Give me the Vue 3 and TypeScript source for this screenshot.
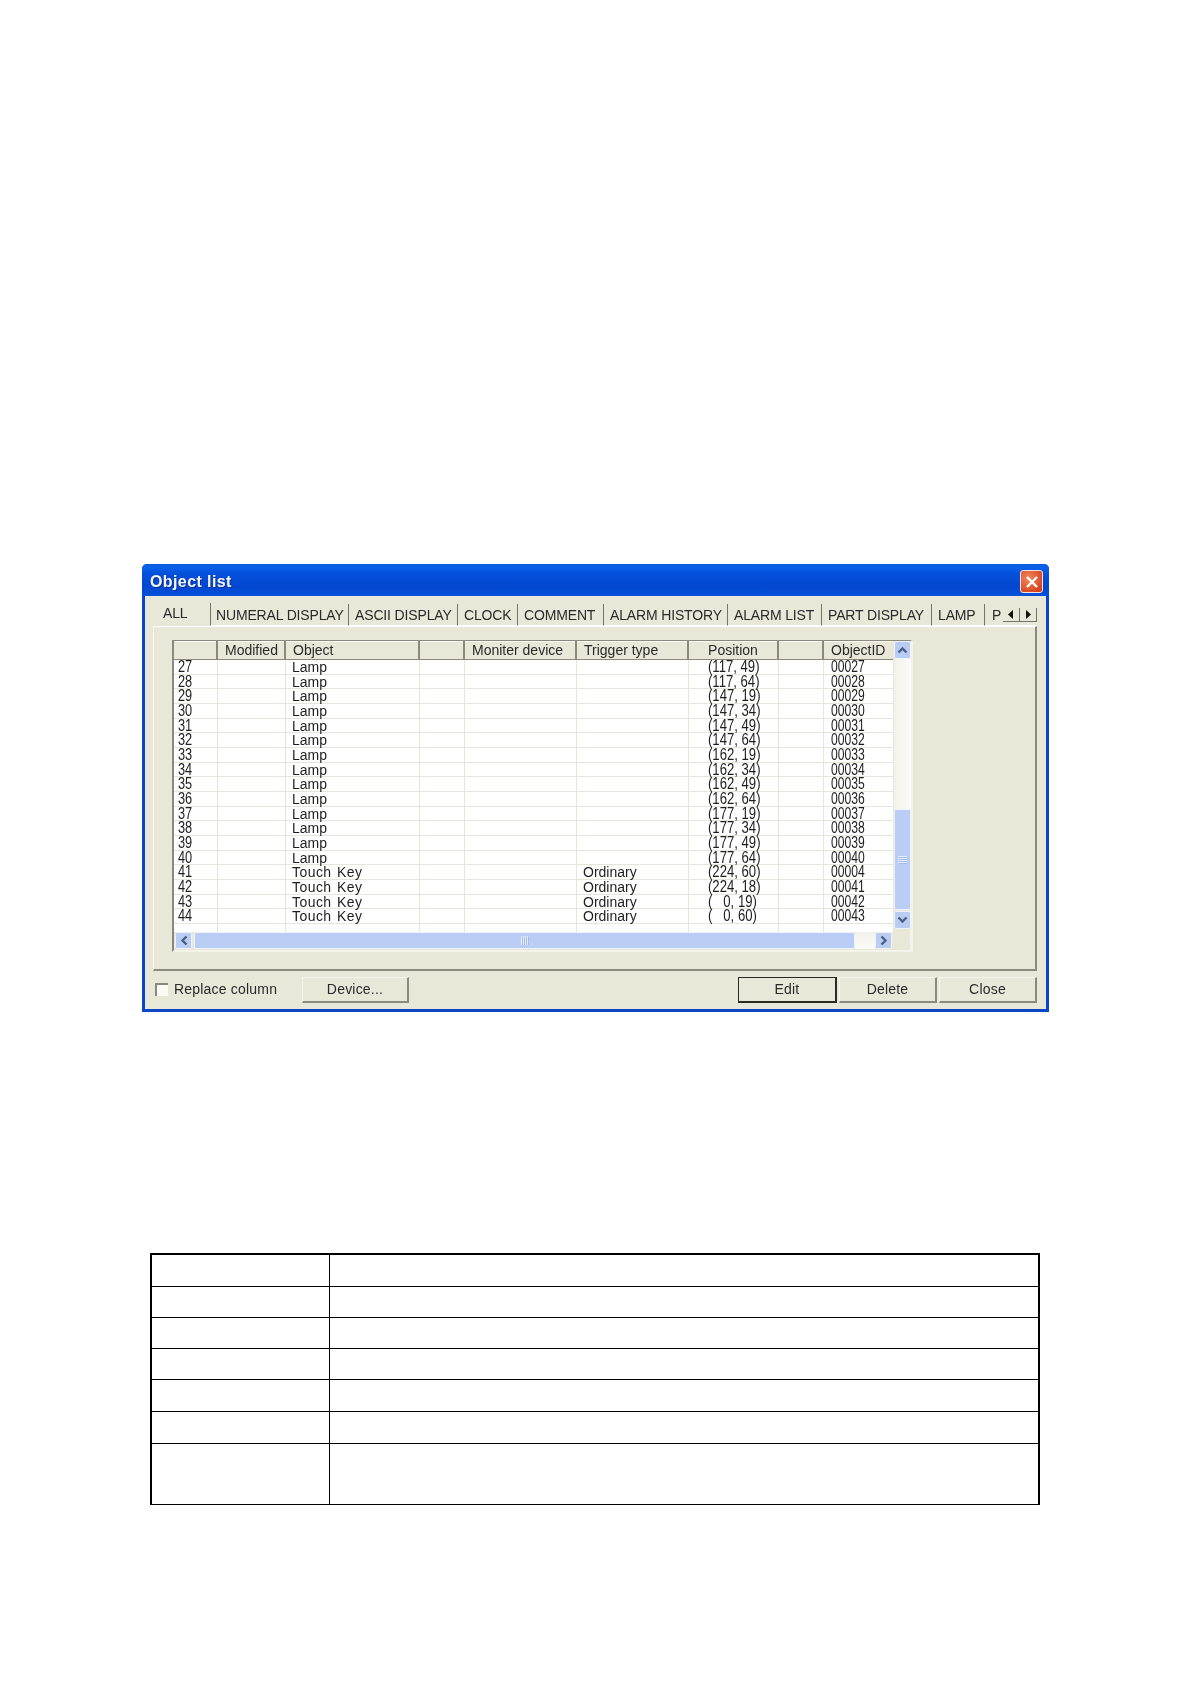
<script setup lang="ts">
import { computed } from 'vue'

interface Tab {
  label: string
  width: number
}

interface Row {
  no: number
  object: string
  trigger: string
  x: number
  y: number
  id: string
}

const tabs: Tab[] = [
  { label: 'NUMERAL DISPLAY', width: 138 },
  { label: 'ASCII DISPLAY', width: 109 },
  { label: 'CLOCK', width: 60 },
  { label: 'COMMENT', width: 86 },
  { label: 'ALARM HISTORY', width: 124 },
  { label: 'ALARM LIST', width: 94 },
  { label: 'PART DISPLAY', width: 110 },
  { label: 'LAMP', width: 53 },
]

const headers = [
  { label: '', align: 'left' },
  { label: 'Modified', align: 'left' },
  { label: 'Object', align: 'left' },
  { label: '', align: 'left' },
  { label: 'Moniter device', align: 'left' },
  { label: 'Trigger type', align: 'left' },
  { label: 'Position', align: 'center' },
  { label: '', align: 'left' },
  { label: 'ObjectID', align: 'left' },
]

const lampPositions = [
  [117, 49], [117, 64], [147, 19], [147, 34], [147, 49], [147, 64], [162, 19],
  [162, 34], [162, 49], [162, 64], [177, 19], [177, 34], [177, 49], [177, 64],
]

const rows = computed<Row[]>(() => {
  const lamps = lampPositions.map(([x, y], i) => ({
    no: 27 + i,
    object: 'Lamp',
    trigger: '',
    x,
    y,
    id: String(27 + i).padStart(5, '0'),
  }))
  const keys = [
    [224, 60, '00004'],
    [224, 18, '00041'],
    [0, 19, '00042'],
    [0, 60, '00043'],
  ] as const
  return [
    ...lamps,
    ...keys.map(([x, y, id], i) => ({
      no: 41 + i,
      object: 'Touch Key',
      trigger: 'Ordinary',
      x,
      y,
      id,
    })),
  ]
})

function position(r: Row) {
  const x = r.x === 0 ? '\u2007 0' : String(r.x)
  return `(${x}, ${r.y})`
}

const specRows = [32, 31, 31, 31, 32, 32, 60]
</script>

<template>
  <div class="page">
    <div class="dialog">
      <div class="titlebar">
        <span class="title">Object list</span>
        <span class="close">
          <svg width="16" height="16" viewBox="0 0 16 16">
            <path d="M3 3 13 13M13 3 3 13" stroke="#fff" stroke-width="2.4" fill="none" />
          </svg>
        </span>
      </div>
      <div class="client">
        <div class="tabstrip">
          <div class="tab active">ALL</div>
          <div v-for="t in tabs" :key="t.label" class="tab" :style="{ width: `${t.width}px` }">{{ t.label }}</div>
          <div class="tab last">P</div>
          <div class="tabnav">
            <span class="navbtn">
              <svg width="6" height="9" viewBox="0 0 6 9"><path d="M5 0v9L0 4.500z" fill="#111" /></svg>
            </span>
            <span class="navbtn">
              <svg width="6" height="9" viewBox="0 0 6 9"><path d="M1 0v9l5-4.500z" fill="#111" /></svg>
            </span>
          </div>
        </div>
        <div class="panel">
          <div class="list">
            <div class="list-top">
              <div class="grid">
                <div class="head">
                  <div v-for="(h, i) in headers" :key="i" class="hcell" :class="h.align">{{ h.label }}</div>
                </div>
                <div class="body">
                  <div v-for="r in rows" :key="r.no" class="row">
                    <div class="cell"><span class="num no">{{ r.no }}</span></div>
                    <div class="cell"></div>
                    <div class="cell text" :class="{ key: r.object === 'Touch Key' }">{{ r.object }}</div>
                    <div class="cell"></div>
                    <div class="cell"></div>
                    <div class="cell text">{{ r.trigger }}</div>
                    <div class="cell pos"><span class="num xy">{{ position(r) }}</span></div>
                    <div class="cell"></div>
                    <div class="cell idcell"><span class="num id">{{ r.id }}</span></div>
                  </div>
                  <div class="row filler">
                    <div v-for="n in 9" :key="n" class="cell"></div>
                  </div>
                </div>
              </div>
              <div class="vscroll">
                <span class="sbtn">
                  <svg width="11" height="8" viewBox="0 0 11 8"><path d="M1.500 6.500 5.500 2.500 9.500 6.500" stroke="#4a5f8c" stroke-width="2.400" fill="none" /></svg>
                </span>
                <div class="vtrack"></div>
                <div class="vthumb">
                  <svg width="9" height="8" viewBox="0 0 9 8">
                    <path d="M0 .5h9M0 2.500h9M0 4.500h9M0 6.500h9" stroke="#e6edfc" fill="none" />
                    <path d="M1 1.500h8M1 3.500h8M1 5.500h8M1 7.500h8" stroke="#a4bbe8" fill="none" />
                  </svg>
                </div>
                <span class="sbtn">
                  <svg width="11" height="8" viewBox="0 0 11 8"><path d="M1.500 1.500 5.500 5.500 9.500 1.500" stroke="#4a5f8c" stroke-width="2.400" fill="none" /></svg>
                </span>
              </div>
            </div>
            <div class="hscroll">
              <span class="sbtn h">
                <svg width="8" height="11" viewBox="0 0 8 11"><path d="M6.500 1.500 2.500 5.500 6.500 9.500" stroke="#4a5f8c" stroke-width="2.400" fill="none" /></svg>
              </span>
              <div class="hthumb">
                <svg width="8" height="9" viewBox="0 0 8 9">
                  <path d="M.5 0v9M2.500 0v9M4.500 0v9M6.500 0v9" stroke="#e6edfc" fill="none" />
                  <path d="M1.500 1v8M3.500 1v8M5.500 1v8M7.500 1v8" stroke="#a4bbe8" fill="none" />
                </svg>
              </div>
              <div class="htrack"></div>
              <span class="sbtn h">
                <svg width="8" height="11" viewBox="0 0 8 11"><path d="M1.500 1.500 5.500 5.500 1.500 9.500" stroke="#4a5f8c" stroke-width="2.400" fill="none" /></svg>
              </span>
            </div>
          </div>
        </div>
        <div class="footer">
          <span class="check"></span>
          <span class="check-label">Replace column</span>
          <button class="btn device">Device...</button>
          <span class="spacer"></span>
          <button class="btn default">Edit</button>
          <button class="btn">Delete</button>
          <button class="btn">Close</button>
        </div>
      </div>
    </div>

    <div class="spec">
      <div v-for="(h, i) in specRows" :key="i" class="spec-row" :style="{ height: `${h}px` }">
        <div class="spec-key"></div>
        <div class="spec-val"></div>
      </div>
    </div>
  </div>
</template>

<style scoped>
.page {
  width: 1191px;
  height: 1684px;
  padding-top: 564px;
  box-sizing: border-box;
  background: #fff;
  font-family: "Liberation Sans", Arial, sans-serif;
  overflow: hidden;
}
.dialog {
  width: 907px;
  height: 448px;
  margin-left: 142px;
  display: flex;
  flex-direction: column;
  background: #0b45c8;
  border-radius: 5px 5px 0 0;
  box-sizing: border-box;
  filter: blur(0.4px);
}
.titlebar {
  height: 32px;
  flex: none;
  display: flex;
  align-items: center;
  justify-content: space-between;
  padding: 3px 6px 0 8px;
  box-sizing: border-box;
  border-radius: 5px 5px 0 0;
  background: linear-gradient(180deg, #0a5ce0 0%, #0a62e8 10%, #0450da 30%, #0347d0 70%, #0450da 100%);
}
.title {
  color: #f4f7ff;
  font-weight: 700;
  font-size: 16px;
  letter-spacing: 0.4px;
  text-shadow: 1px 1px 0 #0a2f95;
}
.close {
  width: 23px;
  height: 23px;
  display: flex;
  align-items: center;
  justify-content: center;
  border: 1px solid #f3e3dc;
  border-radius: 3px;
  box-sizing: border-box;
  background: radial-gradient(circle at 35% 35%, #ee8a60, #dc4a25 70%, #c53a1b);
}
.client {
  flex: 1;
  margin: 0 3px 3px;
  background: #e9e7d8;
  padding: 8px 9px 0 8px;
  display: flex;
  flex-direction: column;
  min-height: 0;
}
.tabstrip {
  height: 22px;
  flex: none;
  display: flex;
  align-items: stretch;
  position: relative;
  color: #2a2a2a;
  font-size: 14px;
  letter-spacing: -0.15px;
}
.tab {
  flex: none;
  box-sizing: border-box;
  padding: 3px 0 0 6px;
  border-right: 1px solid #75736a;
  border-bottom: 1px solid #fff;
  white-space: nowrap;
  overflow: hidden;
}
.tab.active + .tab {
  padding-left: 5px;
}
.tab.active {
  width: 56px;
  padding: 2px 0 0 8px;
  margin-top: -1px;
  border-bottom-color: transparent;
  margin-left: 2px;
}
.tab.last {
  flex: 1;
  border-right: none;
  padding-left: 7px;
}
.tabnav {
  position: absolute;
  right: 0;
  top: 4px;
  display: flex;
  height: 14px;
}
.navbtn {
  width: 17px;
  display: flex;
  align-items: center;
  justify-content: center;
  background: #e9e7d8;
  border-right: 1px solid #75736a;
  border-bottom: 1px solid #75736a;
  box-sizing: border-box;
}
.panel {
  height: 345px;
  flex: none;
  box-sizing: border-box;
  background: #e9e7d8;
  border-top: 1px solid #fff;
  border-left: 1px solid #fbfaf4;
  border-right: 2px solid #8b897b;
  border-bottom: 2px solid #8b897b;
  padding: 13px 0 0 18px;
}
.list {
  width: 741px;
  height: 312px;
  box-sizing: border-box;
  border-top: 1px solid #8b897b;
  border-left: 2px solid #8b897b;
  border-right: 3px solid #f4f3ea;
  border-bottom: 2px solid #f4f3ea;
  display: flex;
  flex-direction: column;
  background: #e9e7d8;
}
.list-top {
  height: 291px;
  flex: none;
  display: flex;
}
.grid {
  width: 719px;
  flex: none;
  display: flex;
  flex-direction: column;
  background: #fff;
}
.head,
.row {
  display: grid;
  grid-template-columns: 44px 68px 134px 45px 112px 112px 90px 45px 69px;
}
.head {
  height: 18px;
  flex: none;
  background: #e9e7d8;
  border-bottom: 1px solid #8b897b;
  box-sizing: content-box;
  color: #2a2a2a;
  font-size: 14px;
}
.hcell {
  box-sizing: border-box;
  line-height: 18px;
  padding-left: 7px;
  border-right: 2px solid #8b897b;
  box-shadow: inset 0 1px 0 #fbfaf4;
  white-space: nowrap;
  overflow: hidden;
}
.hcell.center {
  text-align: center;
  padding-left: 0;
}
.hcell:last-child {
  border-right: none;
}
.body {
  flex: 1;
  min-height: 0;
  overflow: hidden;
  padding-top: 1px;
  margin-top: -1px;
}
.row {
  height: 14.67px;
  box-sizing: border-box;
  border-bottom: 1px solid #e7e5da;
  color: #1e1e1e;
  font-size: 14px;
}
.row.filler {
  height: 9px;
  border-bottom: none;
}
.cell {
  box-sizing: border-box;
  border-right: 1px solid #e7e5da;
  line-height: 14px;
  white-space: nowrap;
}
.cell:last-child {
  border-right: none;
}
.cell.text {
  padding-left: 6px;
}
.cell.key {
  letter-spacing: 0.45px;
  word-spacing: 1px;
}
.cell.idcell {
  padding-left: 7px;
}
.cell.pos {
  padding-left: 19px;
}
.num {
  display: inline-block;
  font-size: 16px;
  line-height: 14px;
  vertical-align: top;
  transform-origin: left center;
}
.no {
  margin-left: 4px;
  transform: scaleX(0.8);
}
.xy {
  transform: scaleX(0.82);
}
.id {
  transform: scaleX(0.76);
}
.vscroll {
  width: 17px;
  margin-left: 1px;
  flex: none;
  display: flex;
  flex-direction: column;
}
.sbtn {
  width: 17px;
  height: 18px;
  flex: none;
  display: flex;
  align-items: center;
  justify-content: center;
  box-sizing: border-box;
  border: 1px solid #eef2fb;
  border-radius: 2px;
  background: #b9cdf3;
}
.sbtn.h {
  width: 17px;
  height: 17px;
}
.vtrack {
  height: 150px;
  flex: none;
  background: linear-gradient(90deg, #f3f2ea, #fbfbf8);
}
.vthumb {
  height: 101px;
  flex: none;
  margin-bottom: 1px;
  display: flex;
  align-items: center;
  justify-content: center;
  box-sizing: border-box;
  border: 1px solid #eef2fb;
  border-radius: 2px;
  background: #b9cdf5;
}
.hscroll {
  height: 18px;
  flex: none;
  display: flex;
  align-items: flex-start;
  padding-left: 1px;
  box-sizing: border-box;
}
.hthumb {
  width: 661px;
  height: 17px;
  margin-left: 2px;
  flex: none;
  display: flex;
  align-items: center;
  justify-content: center;
  box-sizing: border-box;
  border: 1px solid #eef2fb;
  border-radius: 2px;
  background: #b9cdf5;
}
.htrack {
  width: 20px;
  height: 17px;
  flex: none;
  background: linear-gradient(180deg, #f3f2ea, #fbfbf8);
}
.footer {
  flex: 1;
  display: flex;
  align-items: flex-start;
  padding: 6px 0 0 2px;
  color: #2a2a2a;
  font-size: 14px;
}
.check {
  width: 13px;
  height: 13px;
  margin-top: 6px;
  box-sizing: border-box;
  border-top: 2px solid #8b897b;
  border-left: 2px solid #8b897b;
  background: #fbfaf4;
  flex: none;
}
.check-label {
  margin-left: 6px;
  margin-top: 4px;
  letter-spacing: 0.2px;
  white-space: nowrap;
  width: 128px;
}
.btn {
  width: 98px;
  height: 26px;
  margin-left: 2px;
  padding: 0 0 2px;
  box-sizing: border-box;
  font: inherit;
  color: inherit;
  background: #e9e7d8;
  border: 1px solid #f6f5ec;
  border-right: 2px solid #8b897b;
  border-bottom: 2px solid #8b897b;
  letter-spacing: 0.2px;
}
.btn.device {
  width: 107px;
  margin-left: 0;
}
.btn.default {
  width: 99px;
  border: 1px solid #2b2b24;
  border-right-width: 2px;
  border-bottom-width: 2px;
  margin-left: 0;
}
.spacer {
  flex: 1;
}
.spec {
  width: 890px;
  margin: 241px 0 0 150px;
  box-sizing: border-box;
  border: 2px solid #000;
  border-bottom-width: 1px;
}
.spec-row {
  display: flex;
  box-sizing: border-box;
  border-bottom: 1px solid #000;
}
.spec-row:last-child {
  border-bottom: none;
}
.spec-key {
  width: 177px;
  flex: none;
  border-right: 1px solid #000;
}
.spec-val {
  flex: 1;
}
</style>

<style>
html,
body {
  background: #fff;
}
</style>
